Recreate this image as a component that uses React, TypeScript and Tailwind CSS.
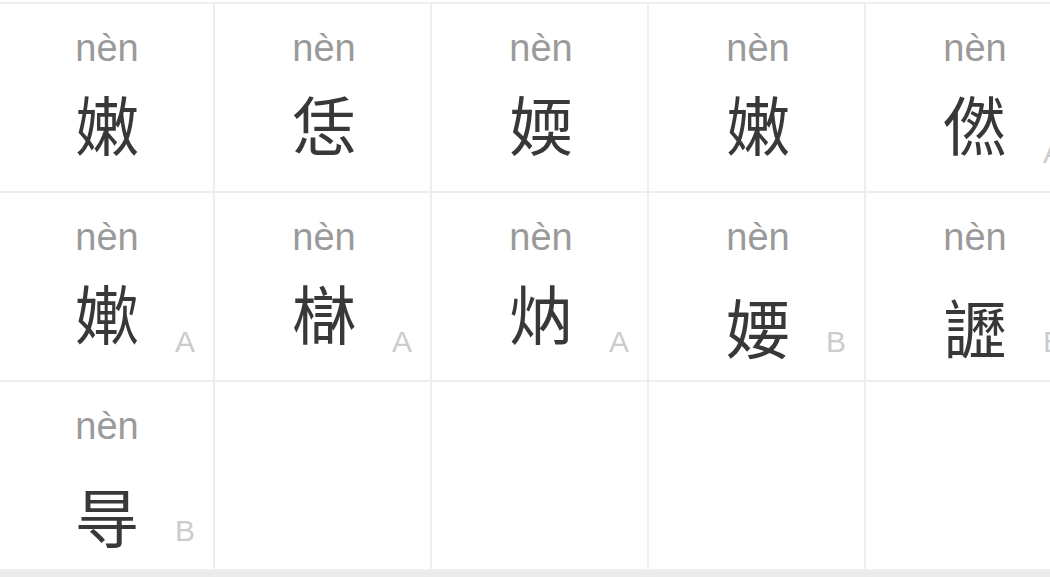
import React from "react";

type Item = { c?: string; l?: string; f?: string };

const items: Item[] = [
  { c: "嫩" },
  { c: "恁" },
  { c: "媆" },
  { c: "嫩" },
  { c: "㒄", l: "A" },
  { c: "㜛", l: "A" },
  { c: "㯎", l: "A" },
  { c: "㶧", l: "A" },
  { c: "婹", l: "B" },
  { c: "讈", l: "B" },
  { c: "㝵", l: "B", f: "jp" },
  {},
  {},
  {},
  {},
];

function Cell({ item }: { item: Item }) {
  const font =
    item.f === "jp"
      ? "font-['Noto_Sans_CJK_JP','Noto_Sans_CJK_KR',sans-serif]"
      : "font-['Noto_Sans_CJK_SC','Noto_Sans_CJK_TC',sans-serif]";
  return (
    <div className="relative h-[189px] border-r-2 border-b-2 border-[#eeeeee] flex flex-col items-center pt-[22px] pl-[3px]">
      {item.c && (
        <>
          <div className="text-[38px] leading-[44px] text-[#9a9a9a] font-['Liberation_Sans',Arial,sans-serif]">
            nèn
          </div>
          <div
            lang={item.f === "jp" ? "ja" : "zh-CN"}
            className={
              "text-[64px] leading-[72px] text-[#383838] " +
              font +
              " " +
              (item.l === "B" ? "mt-[30px]" : "mt-[16px]")
            }
          >
            {item.c}
          </div>
        </>
      )}
      {item.l && (
        <div className="absolute right-[18px] bottom-[23px] text-[30px] leading-[30px] text-[#cccccc] font-['Liberation_Sans',Arial,sans-serif]">
          {item.l}
        </div>
      )}
    </div>
  );
}

export default function App() {
  return (
    <div className="w-[1050px] h-[577px] overflow-hidden bg-[#ebebeb]">
      <div className="bg-white pt-[2px] w-[1090px]">
        <div className="grid grid-cols-5 w-[1085px] -ml-[2px] border-t-2 border-[#eeeeee]">
          {items.map((it, i) => (
            <Cell key={i} item={it} />
          ))}
        </div>
      </div>
    </div>
  );
}
